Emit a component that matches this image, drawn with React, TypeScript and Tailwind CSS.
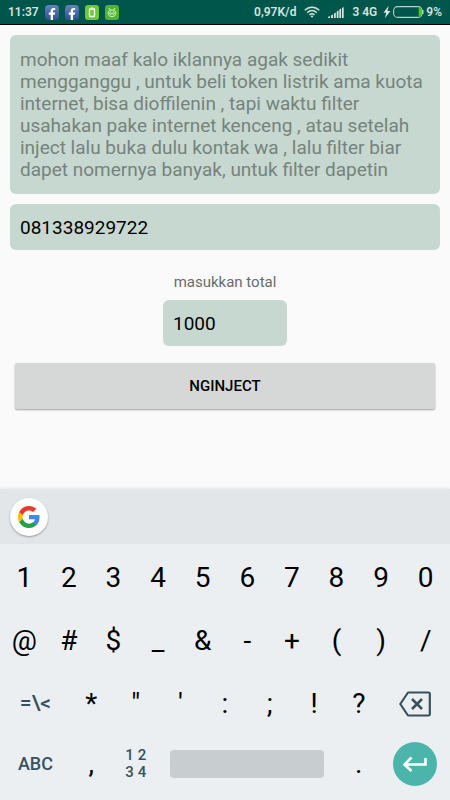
import { useState } from 'react';
import type { ReactNode } from 'react';
import { FaFacebookF } from 'react-icons/fa';

const digits = ['1', '2', '3', '4', '5', '6', '7', '8', '9', '0'];
const symbols = ['@', '#', '$', '_', '&', '-', '+', '(', ')', '/'];
const punctuation = ['*', '"', "'", ':', ';', '!', '?'];

const notice =
  'mohon maaf kalo iklannya agak sedikit mengganggu , untuk beli token listrik ama kuota internet, bisa dioffilenin , tapi waktu filter usahakan pake internet kenceng , atau setelah inject lalu buka dulu kontak wa , lalu filter biar dapet nomernya banyak, untuk filter dapetin';

const FacebookBadge = () => (
  <span className="flex h-[15px] w-3.5 items-end justify-center overflow-hidden rounded-sm bg-gradient-to-b from-[#6484bd] to-[#31508f] text-white">
    <FaFacebookF className="h-3 w-3" />
  </span>
);

const StatusBar = () => (
  <header className="flex h-[25px] items-center justify-between border-b border-black bg-[#00564a] px-2 text-xs font-semibold text-[#d5e3e0]">
    <div className="flex items-center gap-1.5">
      <span>11:37</span>
      <FacebookBadge />
      <FacebookBadge />
      <svg className="h-[15px] w-3.5" viewBox="0 0 14 15">
        <rect width="14" height="15" rx="3" fill="#6bcb35" />
        <path d="M6 3.2h2" stroke="#fff" strokeWidth="1.4" />
        <rect x="4.5" y="4" width="5" height="7.5" rx="0.5" fill="none" stroke="#fff" strokeWidth="1.4" />
      </svg>
      <svg className="h-[15px] w-3.5" viewBox="0 0 14 15" fill="none" stroke="#e3f7d9" strokeWidth="0.9">
        <rect width="14" height="15" rx="3" fill="#4fb52e" stroke="none" />
        <path d="M4 3l1.3 2M10 3L8.7 5M3.2 8.2C3.2 3.8 10.8 3.8 10.8 8.2C10.8 12.8 3.2 12.8 3.2 8.2zM3.4 8.2h7.2M5.2 9.8h1.2M7.6 9.8h1.2" />
        <path d="M5.3 6.6h.8M7.9 6.6h.8" />
      </svg>
    </div>
    <div className="flex items-center">
      <span>0,97K/d</span>
      <svg className="ml-2 h-3 w-4" viewBox="0 0 16 12" fill="none" stroke="#d5e3e0" strokeWidth="1.5">
        <path d="M0.8 4.3C5 0.1 11 0.1 15.2 4.3M3.2 6.7C6 3.9 10 3.9 12.8 6.7M5.5 9C7 7.6 9 7.6 10.5 9" />
        <path d="M6.6 10.2L8 11.8l1.4-1.6C8.6 9.4 7.4 9.4 6.6 10.2z" fill="#d5e3e0" stroke="none" />
      </svg>
      <svg className="ml-2 h-[11px] w-4" viewBox="0 0 16 11" fill="#d5e3e0">
        <path d="M0 11V10l2-1v2zM3 11V8.5l2-1V11zM6 11V6.5l1.8-1V11zM8.7 11V4.5l1.8-1V11zM11.3 11V2.5l1.8-1V11zM14 11V1l1.7-1v11z" />
      </svg>
      <span className="ml-2">3 4G</span>
      <svg className="ml-1.5 h-3 w-2" viewBox="0 0 8 12" fill="#d5e3e0">
        <path d="M5.5 0L0.5 6.8h2.7L2 12l5.5-7H4.6z" />
      </svg>
      <svg className="ml-0.5 h-3 w-[31px]" viewBox="0 0 31 12">
        <rect x="0.6" y="0.6" width="28.5" height="10.8" rx="4" fill="none" stroke="#b9cfca" strokeWidth="1.1" />
        <path d="M29.600 4v4" stroke="#b9cfca" strokeWidth="1.8" />
        <path d="M26 2h.5q1.5 0 1.5 2v4q0 2-1.5 2H26z" fill="#3fd30d" stroke="#3fd30d" strokeWidth="0.6" />
      </svg>
      <span className="ml-0.5">9%</span>
    </div>
  </header>
);

interface KeyProps {
  label: string;
  className?: string;
  children?: ReactNode;
}

const Key = ({ label, className = 'col-span-2 text-[28px] text-black', children }: KeyProps) => (
  <button type="button" aria-label={label} className={`flex items-center justify-center ${className}`}>
    {children ?? label}
  </button>
);

const Keyboard = () => (
  <section className="bg-[#ebeff2] pb-[7px] shadow-[0_0_3px_rgba(0,0,0,0.15)]">
    <div className="flex h-[55px] items-center bg-[#e2e6e9] px-2.5">
      <button
        type="button"
        aria-label="Google"
        className="flex h-[38px] w-[38px] items-center justify-center rounded-full bg-white shadow-[0_1px_2px_rgba(0,0,0,0.35)]"
      >
        <svg className="h-6 w-6" viewBox="0 0 24 24">
          <path fill="#4285f4" d="M22.56 12.25c0-.78-.07-1.53-.2-2.25H12v4.26h5.92c-.26 1.37-1.04 2.53-2.21 3.31v2.77h3.57c2.08-1.92 3.28-4.74 3.28-8.09z" />
          <path fill="#22a04a" d="M12 23c2.97 0 5.46-.98 7.28-2.66l-3.57-2.77c-.98.66-2.23 1.06-3.71 1.06-2.86 0-5.29-1.93-6.16-4.53H2.18v2.84C3.99 20.53 7.7 23 12 23z" />
          <path fill="#fbbc05" d="M5.84 14.09c-.22-.66-.35-1.36-.35-2.09s.13-1.43.35-2.09V7.07H2.18C1.43 8.55 1 10.22 1 12s.43 3.45 1.18 4.93l2.85-2.22.81-.62z" />
          <path fill="#ea3a2d" d="M12 5.38c1.62 0 3.06.56 4.21 1.64l3.15-3.15C17.45 2.09 14.97 1 12 1 7.7 1 3.99 3.47 2.18 7.07l3.66 2.84c.87-2.6 3.3-4.53 6.16-4.53z" />
        </svg>
      </button>
    </div>

    <div className="grid grid-cols-20 grid-rows-[63px_63px_63px_58px] px-0.5 pt-0.5">
      {digits.map((key) => (
        <Key key={key} label={key} />
      ))}
      {symbols.map((key) => (
        <Key key={key} label={key} />
      ))}

      <Key label="=\<" className="col-span-3 text-[21px] font-medium text-[#37525c]" />
      {punctuation.map((key) => (
        <Key key={key} label={key} />
      ))}
      <Key label="Backspace" className="col-span-3">
        <svg className="h-[26px] w-8" viewBox="0 0 32 26" fill="none" stroke="#37525c" strokeWidth="2.2">
          <path d="M9 1.5h20.5q1.3 0 1.3 1.3v20.4q0 1.3-1.3 1.3H9L1.3 13z" strokeLinejoin="round" />
          <path d="M13 8l10 10M23 8L13 18" strokeWidth="2.5" />
        </svg>
      </Key>

      <Key label="ABC" className="col-span-3 text-lg font-medium text-[#37525c]" />
      <Key label="," />
      <Key label="1234" className="col-span-2 text-[15px]/[17px] font-medium text-[#37525c]">
        <span className="grid grid-cols-2 gap-x-1">
          <span>1</span>
          <span>2</span>
          <span>3</span>
          <span>4</span>
        </span>
      </Key>
      <Key label="Space" className="col-span-8 px-3">
        <span className="h-7 w-full rounded bg-[#c8cdd0]" />
      </Key>
      <Key label="." />
      <Key label="Enter" className="col-span-3">
        <span className="flex h-11 w-11 items-center justify-center rounded-full bg-[#4bb5ab]">
          <svg className="h-4 w-6" viewBox="0 0 24 16" fill="none" stroke="#fff" strokeWidth="2.6">
            <path d="M22.5 2v6.5H1.5M8.500 1.5l-7 7 7 6.5" />
          </svg>
        </span>
      </Key>
    </div>
  </section>
);

const App = () => {
  const [message, setMessage] = useState(notice);
  const [phone, setPhone] = useState('081338929722');
  const [total, setTotal] = useState('1000');

  return (
    <div className="flex min-h-screen flex-col bg-[#fafafa] font-[Roboto,sans-serif]">
      <StatusBar />

      <main className="flex flex-1 flex-col items-center p-2.5">
        <textarea
          aria-label="Pesan"
          rows={6}
          value={message}
          onChange={(e) => setMessage(e.target.value)}
          className="block w-full resize-none overflow-hidden rounded-md bg-[#c7d8d0] px-2.5 pt-3.5 pb-[13px] text-[19px]/[22px] text-[#76837d] outline-none"
        />
        <input
          type="tel"
          aria-label="Nomor"
          value={phone}
          onChange={(e) => setPhone(e.target.value)}
          className="mt-2.5 h-[46px] w-full rounded-md bg-[#c7d8d0] px-2.5 text-[19px] text-black outline-none"
        />
        <label htmlFor="total" className="mt-5 text-[15px]/6 text-[#6b6b6b]">
          masukkan total
        </label>
        <input
          id="total"
          inputMode="numeric"
          value={total}
          onChange={(e) => setTotal(e.target.value)}
          className="mt-1.5 h-[46px] w-[124px] rounded-md bg-[#c7d8d0] px-2.5 text-[19px] text-black outline-none"
        />
        <div className="mt-[17px] w-full px-[5px]">
          <button
            type="button"
            className="h-[46px] w-full rounded-xs bg-[#d6d8d7] text-[15px] font-medium text-black shadow-[0_1px_2px_rgba(0,0,0,0.35)]"
          >
            NGINJECT
          </button>
        </div>
      </main>

      <Keyboard />
    </div>
  );
};

export default App;
